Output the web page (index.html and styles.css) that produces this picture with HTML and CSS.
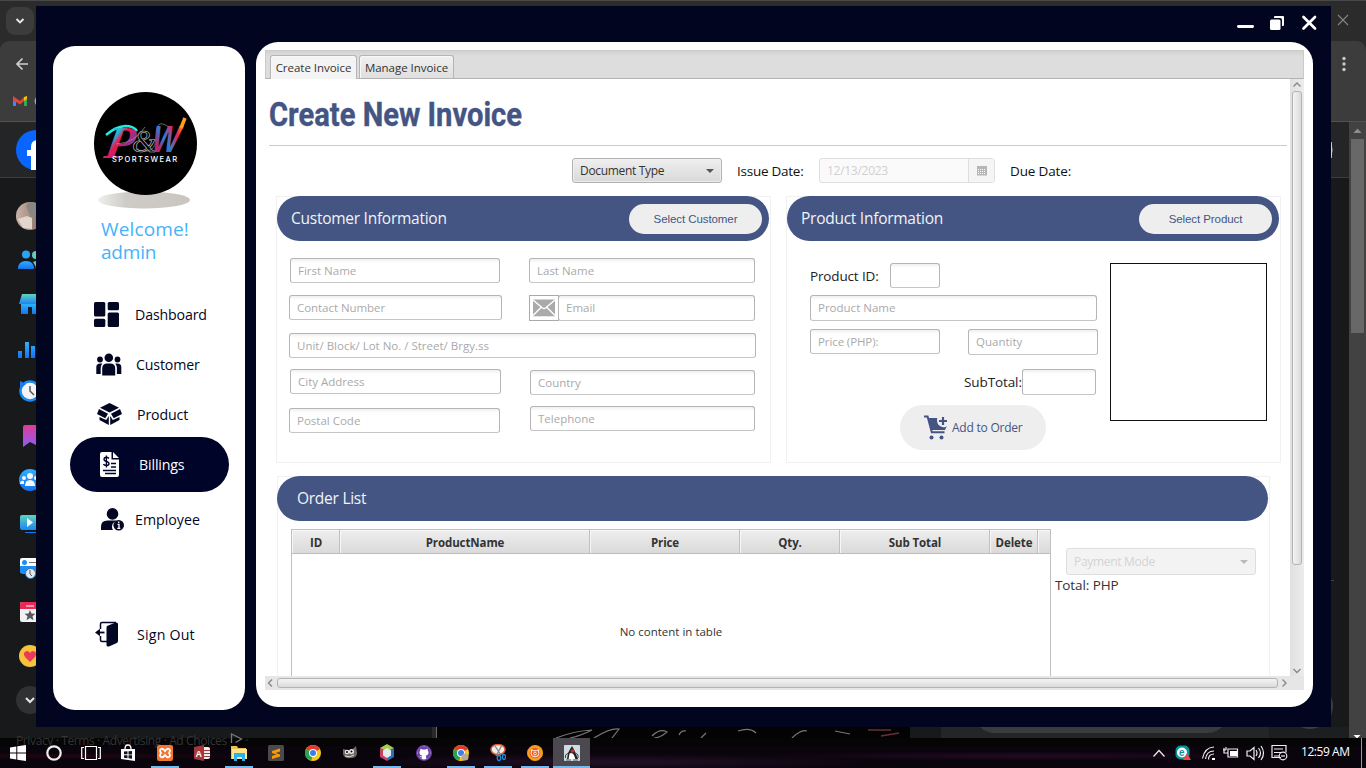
FILE: index.html
```html
<!DOCTYPE html>
<html lang="en">
<head>
<meta charset="utf-8">
<title>Create Invoice</title>
<link rel="stylesheet" href="styles.css">
</head>
<body>
<div class="desktop">
  <div class="browser">
    <div class="tabstrip"></div>
    <div class="toolbar"></div>
    <div class="site-head"></div>
    <div class="site-body"></div>
    <svg class="edge" width="1366" height="738" viewBox="0 0 1366 738">
      <defs>
        <linearGradient id="teal" x1="0" y1="0" x2="0" y2="1"><stop offset="0" stop-color="#5ed3c0"/><stop offset="1" stop-color="#1b84f5"/></linearGradient>
        <linearGradient id="blue" x1="0" y1="0" x2="0" y2="1"><stop offset="0" stop-color="#2fb0fb"/><stop offset="1" stop-color="#1772ee"/></linearGradient>
        <linearGradient id="mark" x1="0" y1="0" x2="0" y2="1"><stop offset="0" stop-color="#dd3c98"/><stop offset="1" stop-color="#8e5cf5"/></linearGradient>
        <linearGradient id="face" x1="0" y1="0" x2="1" y2="0"><stop offset="0" stop-color="#c9b4ab"/><stop offset=".55" stop-color="#a58b7e"/><stop offset="1" stop-color="#6e5a52"/></linearGradient>
      </defs>
      <rect x="6" y="7" width="28" height="28" rx="9" fill="#3c3c3c"/>
      <path d="M16.500 19l3.500 3.500 3.500-3.500" fill="none" stroke="#e8e8e8" stroke-width="1.900"/>
      <path d="M28 64H17M22.500 58.500L17 64l5.500 5.500" fill="none" stroke="#cfcfcf" stroke-width="1.700"/>
      <path d="M13 97v9h3v-6z" fill="#4285f4"/><path d="M27 97v9h-3v-6z" fill="#34a853"/><path d="M24 97l3-1v3l-3 2z" fill="#fbbc04"/><path d="M13 96l7 5 4-4v4l-4 3.500L13 100z" fill="#ea4335"/>
      <path d="M38 96.500q-5 4.500 0 9" fill="none" stroke="#8ab4d8" stroke-width="2"/>
      <circle cx="36" cy="150" r="20" fill="#0866ff"/>
      <path d="M31 170v-14h-4v-6h4v-3q0-7 7-7v30z" fill="#fff"/>
      <circle cx="30" cy="216" r="14" fill="url(#face)"/><path d="M18 219l9-3 5 2v11l-9-1z" fill="#e2d5cd"/><path d="M26 206q5-6 10-3v14h-5z" fill="#8a8683"/>
      <circle cx="26" cy="254.500" r="4" fill="#2aa5f6"/><path d="M18 269q0-8 8-8t8 8z" fill="url(#blue)"/><path d="M36 251q-4 0-4 4t4 4zM36 261l-3 1q3 4 3 7z" fill="#63cdbb"/>
      <path d="M22 294h14v10H19z" fill="url(#teal)"/><path d="M21 304h15v10h-4v-7h-4v7h-7z" fill="url(#blue)"/>
      <path d="M18 351h4v7h-4zM25 342h4v16h-4zM31 346h4v12h-4z" fill="url(#blue)"/>
      <circle cx="30" cy="391" r="9.500" fill="#f2f4f7" stroke="#168cf3" stroke-width="2.500"/><path d="M20 381l6 3-6 5z" fill="#1b7af0"/><path d="M30 386v5l4 4" fill="none" stroke="#555" stroke-width="1.500"/>
      <path d="M23 427q0-2 2-2h11v20l-6-3-7 5z" fill="url(#mark)"/>
      <circle cx="30" cy="480" r="11" fill="url(#blue)"/><g fill="#f3f6fa"><circle cx="30" cy="476" r="3"/><circle cx="24" cy="478" r="2"/><circle cx="36" cy="478" r="2"/><path d="M25 486q0-6 5-6t5 6zM20 484q0-4 4-3v3z"/></g>
      <path d="M20 517q0-2 2-2h14v15H22q-2 0-2-2z" fill="url(#teal)"/><path d="M27 518l6 4.500-6 4.500z" fill="#fff"/><path d="M25 532.500h11" stroke="#1877f2"/>
      <rect x="20" y="558" width="18" height="15" rx="2" fill="#fff"/><path d="M20 566h16v8H23q-3 0-3-3z" fill="#1b8df5"/><circle cx="24.500" cy="562.500" r="2.500" fill="#1b8df5"/><path d="M29 562.500h7" stroke="#66727c"/><circle cx="30.500" cy="573.500" r="5" fill="#e4e6e9" stroke="#2f74b8"/><path d="M30 570v4l2 2" fill="none" stroke="#555"/>
      <rect x="20" y="602" width="20" height="20" rx="2" fill="#f1f2f4"/><path d="M20 609v-5q0-2 2-2h14v7z" fill="#ea2a55"/><path d="M26 606h8" stroke="#fff"/><path d="M30 610l1.500 3.500 4 .3-3 2.500 1 4-3.500-2.300-3.500 2.300 1-4-3-2.500 4-.3z" fill="#55585d"/>
      <circle cx="30" cy="656" r="11" fill="#f8c33c"/><path d="M30 662l-5-5q-3-5 2-6 2 0 3 2 1-2 3-2 5 1 2 6z" fill="#ee3a58"/>
      <circle cx="30" cy="700" r="14" fill="#303132"/><path d="M26 698l4 4 4-4" fill="none" stroke="#e6e6e6" stroke-width="2"/>
      <path d="M1338 15l10 10M1348 15l-10 10" stroke="#858585" stroke-width="1.100"/>
      <g fill="#c9c9c9"><circle cx="1344" cy="58.500" r="1.700"/><circle cx="1344" cy="64" r="1.700"/><circle cx="1344" cy="69.500" r="1.700"/></g>
      <path d="M1331 142q2 8 0 16z" fill="#d8cfc9" stroke="#d8cfc9"/>
      <rect x="1349" y="122" width="17" height="616" fill="#424242"/><path d="M1353.500 133l4-4.500 4 4.500z" fill="#8d8d8d"/><rect x="1351" y="139" width="13" height="194" fill="#686868"/><path d="M1353.500 735h7l-3.500 3.500z" fill="#fff"/>
      <path d="M432 727h5v11h-5z" fill="#29292b"/><path d="M437 727h473v11H437z" fill="#030303"/><path d="M436.500 727v11" stroke="#6a6a6a"/>
      <path d="M941 727h328v11H941z" fill="#242526"/><path d="M1269 727h80v11h-80z" fill="#1d1e1f"/>
      <path d="M980 727h242q-6 6-16 6H996q-10 0-16-6z" fill="#3a3b3c"/><circle cx="1310" cy="706" r="23" fill="#3c3d3f"/>
      <path d="M1331 580.500h3" stroke="#3e4042"/>
      <g fill="none" stroke="#77777a" stroke-width="1.200"><path d="M556 738q18-7 36-8-12 6-22 8M594 738q16-10 25-9l-7 9M652 736q8-8 15-4-7 6-13 6M679 735q2-5 7-4M706 733l-5 5M738 731q12-4 18 2M792 738q9-9 15-7M835 731l15 3"/></g>
      <path d="M868 730h23M881 736l18-3" stroke="#643238" stroke-width="1.500"/>
    </svg>
  </div>

  <div class="app">
    <aside class="sidebar">
      <svg class="logo" width="110" height="120" viewBox="0 0 110 120">
        <defs>
          <linearGradient id="pg" x1="0" y1="0" x2="1" y2="1"><stop offset="0" stop-color="#18f0dc"/><stop offset=".33" stop-color="#24b9d2"/><stop offset=".45" stop-color="#ed174f"/><stop offset=".65" stop-color="#8f3193"/><stop offset="1" stop-color="#2cc8ee"/></linearGradient>
          <linearGradient id="wg" x1="0" y1="1" x2="1" y2="0"><stop offset="0" stop-color="#f01d55"/><stop offset=".25" stop-color="#b52474"/><stop offset=".45" stop-color="#287fd3"/><stop offset=".7" stop-color="#ed2250"/><stop offset=".9" stop-color="#ff9c19"/></linearGradient>
          <linearGradient id="sh"><stop offset="0" stop-color="#efefed"/><stop offset=".3" stop-color="#cfccc8"/><stop offset="1" stop-color="#c9c6c1"/></linearGradient>
        </defs>
        <ellipse cx="54" cy="110" rx="46" ry="8.500" fill="url(#sh)"/>
        <circle cx="55.500" cy="53.500" r="51.500" fill="#000"/>
        <path d="M16 45q9-8 19-9 9 0 12 5" fill="none" stroke="#1feddd" stroke-width="2.500"/>
        <text class="logo-p" fill="url(#pg)" transform="translate(13 68) skewX(-10) scale(1.050 1)">P</text>
        <text x="42" y="62" class="logo-amp">&amp;</text>
        <path d="M26 54q19-1 29-17M46 59q20 8 20-13t16-6" fill="none" stroke="#aaa" stroke-width=".6"/>
        <text class="logo-w" fill="url(#wg)" transform="translate(61 62) skewX(-8) scale(.75 1)">W</text>
        <path d="M91 38l4-10" stroke="#ff9e1a" stroke-width="3.500"/>
        <text x="22" y="71.500" class="logo-s" textLength="65" lengthAdjust="spacing">SPORTSWEAR</text>
      </svg>
      <div class="welcome"><div class="w1">Welcome!</div><div class="w2">admin</div></div>
      <nav class="menu">
        <a class="item dash"><svg width="25" height="25" viewBox="0 0 25 25" fill="#040724"><rect width="11.300" height="14.500" rx="1.500"/><rect y="16.800" width="11.300" height="8.200" rx="1.500"/><rect x="13.700" width="11.300" height="8.200" rx="1.500"/><rect x="13.700" y="10.400" width="11.300" height="14.600" rx="1.500"/></svg><span>Dashboard</span></a>
        <a class="item cust"><svg width="26" height="23" viewBox="0 0 26 23" fill="#040724"><circle cx="12.800" cy="4.700" r="4.300"/><circle cx="4" cy="6.500" r="2.900"/><circle cx="21.500" cy="6.500" r="2.900"/><path d="M6.200 22.500v-7q0-5 5-5h3q5 0 5 5v7zM.3 21v-7q0-3.600 4-3.600h2q-1.600 2-1.600 5V21zM25.300 21v-7q0-3.600-4-3.600h-2q1.600 2 1.600 5V21z"/></svg><span>Customer</span></a>
        <a class="item prod"><svg width="25" height="22" viewBox="0 0 25 22" fill="#040724"><path d="M12.500 0L22 4.700l-9.500 4.800L3 4.700z"/><path d="M2 6l9 4.700-2.700 4.600L0 11zM23 6l-9 4.700 2.700 4.600L25 11zM2.500 14l6.700 3 2.600-4V22l-9.300-5zM22.500 14l-6.700 3-2.600-4V22l9.300-5z"/></svg><span>Product</span></a>
        <a class="item bill active"><svg width="19" height="25" viewBox="0 0 19 25"><path d="M2 0h9.500v7.500H19V23q0 2-2 2H2q-2 0-2-2V2q0-2 2-2zM13 0l6 6h-6z" fill="#fff"/><path d="M9 6.500Q8 5 6 5.200T4 7.200q0 1.600 2.500 2.200T9 11.800Q9 13.500 6.500 13.500T3.500 12M6.400 3.500v12" fill="none" stroke="#000428" stroke-width="1.400"/><path d="M11 11.500h5M11 15h5M3 18.500h13M5 21.500h11" stroke="#000428" stroke-width="1.300"/></svg><span>Billings</span></a>
        <a class="item emp"><svg width="24" height="23" viewBox="0 0 24 23" fill="#040724"><circle cx="11.500" cy="5.900" r="5.800"/><path d="M0 22v-3.500q0-6 6.500-6h9.500q-5 2-5 6 0 2 1 3.500z"/><circle cx="17.700" cy="17.200" r="5.300"/><path d="M17.700 13.500v1.500M16.500 16.300h1.500v4M16.300 20.300h3" stroke="#fff" stroke-width="1.300" fill="none"/></svg><span>Employee</span></a>
        <a class="item out"><svg width="24" height="26" viewBox="0 0 24 26"><path d="M5.500 8V3q0-1.500 1.500-1.500h14M5.500 15v4q0 1.500 1.500 1.500h5" fill="none" stroke="#040724" stroke-width="1.500"/><path d="M12 5l8.500-3.500Q23 1 23 3v17q0 1.500-1.200 2L14 25.500q-2.500.5-2.500-1.500V7q0-1.500.5-2z" fill="#040724"/><path d="M9.500 11.500H3" stroke="#040724" stroke-width="1.800"/><path d="M0 11.500L5 7.800v7.400z" fill="#040724"/></svg><span>Sign Out</span></a>
      </nav>
    </aside>

    <section class="main">
      <div class="tabs"><div class="tab on"><span>Create Invoice</span></div><div class="tab"><span>Manage Invoice</span></div></div>
      <div class="viewport">
        <div class="content">
          <h1><span>Create New Invoice</span></h1>
          <div class="filters">
            <div class="combo doc"><span>Document Type</span><i class="caret"></i></div>
            <label class="issue">Issue Date:</label>
            <div class="date"><span>12/13/2023</span><b><svg width="10" height="10" viewBox="0 0 10 10"><path d="M0 0h10v9.500H0z" fill="#b5b5b5"/><path d="M1 3.500h8M1 5.500h8M1 7.500h8" stroke="#fff" stroke-dasharray="1 1"/></svg></b></div>
            <label class="due">Due Date:</label>
          </div>
          <div class="cards">
            <div class="card">
              <div class="bar"><span class="ci">Customer Information</span><button class="sc">Select Customer</button></div>
              <div class="row r1"><div class="field f1">First Name</div><div class="field f2">Last Name</div></div>
              <div class="row r2"><div class="field f3">Contact Number</div><div class="mail"><svg width="24" height="18" viewBox="0 0 24 18"><path d="M1 .5h22v16.800H1z" fill="#aaa"/><path d="M1 1l9.500 8q1.500 1.200 3 0L23 1M1 16.500l8-8M23 16.500l-8-8" fill="none" stroke="#fff" stroke-width="1.400"/></svg></div><div class="field f4">Email</div></div>
              <div class="row r3"><div class="field f5">Unit/ Block/ Lot No. / Street/ Brgy.ss</div></div>
              <div class="row r4"><div class="field f6">City Address</div><div class="field f7">Country</div></div>
              <div class="row r5"><div class="field f8">Postal Code</div><div class="field f9">Telephone</div></div>
            </div>
            <div class="card">
              <div class="bar"><span class="pi">Product Information</span><button class="sp">Select Product</button></div>
              <div class="product">
                <div class="pform">
                  <div class="row"><label class="pid">Product ID:</label><div class="field p1"></div></div>
                  <div class="row q2"><div class="field p2">Product Name</div></div>
                  <div class="row q3"><div class="field p3">Price (PHP):</div><div class="field p4">Quantity</div></div>
                  <div class="row q4"><label class="sub">SubTotal:</label><div class="field p5"></div></div>
                  <button class="add"><svg width="24" height="25" viewBox="0 0 24 25"><path d="M0 1.500h3.600l4.200 15.800h12.700" fill="none" stroke="#445584" stroke-width="2"/><path d="M4.500 3h8.700q-1.300 7 5 9 3 .8 4.600-.7L21 15H7.500z" fill="#445584"/><path d="M19 2v8M15 6h8" stroke="#445584" stroke-width="2.200"/><circle cx="7.500" cy="22.500" r="2" fill="#445584"/><circle cx="17.500" cy="22.500" r="2" fill="#445584"/></svg><span>Add to Order</span></button>
                </div>
                <div class="photo"></div>
              </div>
            </div>
          </div>
          <div class="orders">
            <div class="bar wide"><span class="ol">Order List</span></div>
            <div class="order-body">
              <div class="table">
                <div class="thead"><div>ID</div><div>ProductName</div><div>Price</div><div>Qty.</div><div>Sub Total</div><div>Delete</div><div></div></div>
                <div class="empty">No content in table</div>
              </div>
              <div class="pay"><div class="combo off"><span>Payment Mode</span><i class="caret"></i></div><div class="total">Total: PHP</div></div>
            </div>
          </div>
        </div>
        <div class="vscroll"><svg width="14" height="12" viewBox="0 0 14 12"><path d="M3.500 7.500L7 4l3.500 3.500" fill="none" stroke="#888" stroke-width="1.400"/></svg><div class="vthumb"></div><svg class="end" width="14" height="12" viewBox="0 0 14 12"><path d="M3.500 5L7 8.500 10.500 5" fill="none" stroke="#888" stroke-width="1.400"/></svg></div>
      </div>
      <div class="hscroll"><svg width="12" height="14" viewBox="0 0 12 14"><path d="M7 3.500L3.500 7 7 10.500" fill="none" stroke="#888" stroke-width="1.400"/></svg><div class="hthumb"></div><svg width="12" height="14" viewBox="0 0 12 14"><path d="M4.500 3.500L8 7l-3.500 3.500" fill="none" stroke="#888" stroke-width="1.400"/></svg></div>
    </section>
    <svg class="winbtns" width="80" height="18" viewBox="0 0 80 18"><rect y="11" width="17" height="3" rx="1.400" fill="#fff"/><path d="M37 3q0-1 1-1h8q1 0 1 1v8q0 1-1 1h-1V6q0-2-2-2h-6z" fill="#fff"/><rect x="33" y="5.500" width="10.500" height="10.500" rx="1.500" fill="#fff"/><path d="M66.500 3l11.500 11.500M78 3L66.500 14.500" stroke="#fff" stroke-width="2.700" stroke-linecap="round"/></svg>
  </div>

  <footer class="taskbar">
    <div class="ghost">Privacy · Terms · Advertising · Ad Choices <svg width="13" height="12" viewBox="0 0 13 12"><path d="M1.500 10V1l10 5-6 3.500" fill="none" stroke="#77787a" stroke-width="1.300"/></svg> ·</div>
    <div class="t wide1"><svg width="16" height="16" viewBox="0 0 16 16" fill="#fff"><path d="M0 2.500L6.300 1.500v6H0zM7.300 1.300L16 0v7.500H7.300zM0 8.500h6.300v6L0 13.600zM7.300 8.500H16V16l-8.700-1.300z"/></svg></div>
    <div class="t"><svg width="16" height="16" viewBox="0 0 16 16"><circle cx="8" cy="8" r="6.700" fill="none" stroke="#eee" stroke-width="2.200"/></svg></div>
    <div class="t"><svg width="20" height="16" viewBox="0 0 20 16"><path d="M4.500 1.500h11v13h-11zM3 2.500H.7v11H3M17 2.500h2.300v11H17" fill="none" stroke="#fff" stroke-width="1.200"/></svg></div>
    <div class="t"><svg width="16" height="18" viewBox="0 0 16 18"><path d="M1 5h14v12L1 15z" fill="#fff"/><path d="M5 5q0-4 3-4t3 4" fill="none" stroke="#fff" stroke-width="1.300"/><path d="M4 7.500l3.500-.2v3H4zM8.500 7.200l3.500-.3v3.500H8.500zM4 11.200h3.500v3L4 13.800zM8.500 11.200H12v3.500l-3.500-.4z" fill="#15111a"/></svg></div>
    <div class="t run"><svg width="16" height="16" viewBox="0 0 16 16"><rect width="16" height="16" rx="2" fill="#f4762c"/><path d="M4 4q2-1 4 2 2-3 4-2t0 4q2 3 0 4t-4-2q-2 3-4 2t0-4q-2-3 0-4z" fill="none" stroke="#fff" stroke-width="1.800"/></svg></div>
    <div class="t"><svg width="16" height="16" viewBox="0 0 16 16"><path d="M0 2l10-2v16L0 14z" fill="#a4373a"/><text x="1.500" y="12" class="ac">A</text><path d="M10 2h4q2 0 2 2v8q0 2-2 2h-4z" fill="#eee"/><path d="M10 5.500h6M10 8.500h6M10 11.500h6" stroke="#a4373a"/></svg></div>
    <div class="t run"><svg width="16" height="16" viewBox="0 0 16 16"><path d="M0 1h6l1 2h8v11H0z" fill="#f0c050"/><path d="M1 4h15v10H1z" fill="#ffe48c"/><path d="M3 8h11v8h-3v-4H6v4H3z" fill="#29b3ee"/></svg></div>
    <div class="t"><svg width="16" height="16" viewBox="0 0 16 16"><rect width="16" height="16" rx="1.500" fill="#4a4a4a"/><path d="M4 6l8-2.500v3L7.500 8 12 9.500v2L4 14v-3l4.500-1.500L4 8z" fill="#ff9800"/></svg></div>
    <div class="t"><svg width="16" height="16" viewBox="0 0 16 16"><circle cx="8" cy="8" r="8" fill="#f9c916"/><path d="M8 8L1 4q2.500-4 7-4t7 4z" fill="#e33b2e"/><path d="M8 8L1 4q-3 6 2 10.500l3.500.5z" fill="#2ba24c"/><circle cx="8" cy="8" r="4" fill="#fff"/><circle cx="8" cy="8" r="3" fill="#3c7de8"/></svg></div>
    <div class="t"><svg width="16" height="16" viewBox="0 0 16 16"><path d="M1 4l4 1 4 .5L14 1l1 7q0 5-6 5-7 1-8-4z" fill="#6e6a62"/><circle cx="5" cy="7" r="2.200" fill="#eee"/><circle cx="9.500" cy="6.500" r="2.500" fill="#eee"/><circle cx="5" cy="7" r="1"/><circle cx="9.500" cy="6.500" r="1"/><path d="M3 11q5 2 9-1" stroke="#ddd" fill="none"/></svg></div>
    <div class="t run"><svg width="16" height="18" viewBox="0 0 16 18"><path d="M8 0l7 4-7 4-7-4z" fill="#a4cf4a"/><path d="M1 4l7 4v9l-7-4z" fill="#c34263"/><path d="M15 4L8 8v9l7-4z" fill="#2c6fb3"/><path d="M8 4l4 2.500v5L8 14l-4-2.500v-5z" fill="#e4eaec"/></svg></div>
    <div class="t"><svg width="16" height="16" viewBox="0 0 16 16"><circle cx="8" cy="8" r="7.200" fill="#fff" stroke="#6e40a8" stroke-width="1.500"/><path d="M8 1.500a6.500 6.500 0 0 0-2.200 12.600v-1.800q-1.600.3-2.300-1.200 1.200 0 2.400.4l.5-.8Q3.500 10.200 3.500 7.500q0-1.200.8-1.900-.2-1 .1-1.900 1 0 2 .9 1.600-.4 3.200 0 1-.9 2-.9.3 1 .1 1.900.8.800.8 1.900 0 2.700-2.900 3.200.5.500.5 1.300v2.100A6.500 6.500 0 0 0 8 1.500z" fill="#6e40a8"/></svg></div>
    <div class="t run"><svg width="16" height="16" viewBox="0 0 16 16"><circle cx="8" cy="8" r="8" fill="#f9c916"/><path d="M8 8L1 4q2.500-4 7-4t7 4z" fill="#e33b2e"/><path d="M8 8L1 4q-3 6 2 10.500l3.500.5z" fill="#2ba24c"/><circle cx="8" cy="8" r="4" fill="#fff"/><circle cx="8" cy="8" r="3" fill="#3c7de8"/><circle cx="12" cy="12" r="3.600" fill="#b9a69b"/></svg></div>
    <div class="t run"><svg width="16" height="18" viewBox="0 0 16 18"><ellipse cx="8" cy="5.500" rx="7" ry="5" fill="#eee" stroke="#e2562c" stroke-width="1.500"/><path d="M5 2l6 9M12 1L6 12" stroke="#888" stroke-width="1.300"/><ellipse cx="9" cy="14" rx="1.700" ry="2.500" fill="none" stroke="#1b90dc" stroke-width="1.300"/><ellipse cx="14" cy="13" rx="1.500" ry="2.500" fill="none" stroke="#1b90dc" stroke-width="1.300"/></svg></div>
    <div class="t run"><svg width="16" height="16" viewBox="0 0 16 16"><path d="M8 0l3 .5L14 2.500l1.500 2.500.5 3-.5 3-2.500 3-2 1.500L8 16l-3-.5L2.500 13.500.5 11 0 8l.5-3L2.500 2.500 5 .5z" fill="#f9a01b"/><circle cx="8" cy="8" r="5.300" fill="#f15c22"/><path d="M4.500 4.800l2 .9h3l2-.9.3 3.700q0 3.300-3.800 3.300T4.200 8.500z" fill="none" stroke="#fff" stroke-width=".9"/><circle cx="8" cy="8.500" r="1.400" fill="none" stroke="#fff" stroke-width=".8"/></svg></div>
    <div class="t cur"><svg width="16" height="16" viewBox="0 0 16 16"><rect width="16" height="16" rx="1" fill="#cfdce4"/><path d="M8 1q2 3 3.500 7l2.500 6H3l1-6q2-4 4-7z" fill="#222"/><path d="M5.500 8.500q2.500-1.500 4.500 1.500l1.500 4.500H4.500z" fill="#fff"/><circle cx="8.500" cy="6" r="1.800" fill="#e8231c"/><path d="M4.500 8L1.500 10v3M11.500 8l2.500 2v3" fill="none" stroke="#444"/><path d="M2 15h5M9 15h5" stroke="#555"/></svg></div>
    <svg class="tray" width="220" height="30" viewBox="1146 738 220 30"><g fill="none" stroke="#eee" stroke-width="1.200"><path d="M1153.500 756.500l5.500-6 5.500 6M1205.500 759q1-8 8.500-8M1208.500 759.500q0-5.500 5.500-5.500M1202.500 758.500q2-11 11.500-11.500M1228 749h9.500v8H1228zM1224 748v5h4M1223 750h3M1226 747v3M1247 751h3l4-3.500v12l-4-3.500h-3zM1256 750q2 3 0 6M1258.500 748q4 5 0 10M1261 746q5 7 0 14M1281 757.500h-9v-12h14v7M1274 749h9M1274 752.500h7M1274 756h5"/><circle cx="1283" cy="756" r="3.800"/><path d="M1281 756h4"/></g><path d="M1230 751h7v5h-7z" fill="#fff"/><path d="M1212 758h3v2h-3z" fill="#fff"/><rect x="1175.500" y="745.500" width="14" height="14" rx="5" fill="#0b909c"/><circle cx="1182" cy="752.500" r="5" fill="#fff"/><text x="1179" y="756" class="eset">e</text><path d="M1187 753l4 7h-8z" fill="#e74b3c"/><path d="M1361.500 738v30" stroke="#999"/></svg>
    <span class="clock">12:59 AM</span>
  </footer>
</div>
</body>
</html>
```
FILE: styles.css
```css
* { box-sizing: border-box; }
body { margin: 0; overflow: hidden; font-family: "Open Sans", "Noto Sans", sans-serif; font-size: 11.5px; color: #333; }
h1 { margin: 0; }
button { border: 0; font: inherit; padding: 0; }
.desktop { position: relative; width: 1366px; height: 768px; overflow: hidden; background: #18191a; }

/* browser behind the application */
.browser { height: 738px; display: flex; flex-direction: column; background: #2b2b2b; }
.tabstrip { height: 41px; border-top: 1px solid #484848; }
.toolbar { height: 81px; background: #3c3c3c; border-radius: 9px 9px 0 0; border-bottom: 1px solid #505152; }
.site-head { height: 56px; background: #242527; border-bottom: 1px solid #3b3c3d; }
.site-body { flex: 1; background: #18191a; }
.edge { position: absolute; left: 0; top: 0; }

/* application window */
.app { position: absolute; left: 36px; top: 6px; width: 1295px; height: 721px; background: #020520; display: flex; align-items: flex-start; padding: 36px 18px 0 17px; gap: 11px; }
.winbtns { position: absolute; left: 1201px; top: 8px; }
.sidebar { width: 192px; height: 664px; margin-top: 4px; background: #fff; border-radius: 22px; padding-top: 44px; }
.logo { display: block; margin-left: 37px; }
.logo-p { font: italic 700 46px "Liberation Serif", serif; }
.logo-w { font: italic 700 38px "Liberation Sans", sans-serif; }
.logo-amp { font: italic 400 32px "Liberation Serif", serif; fill: none; stroke: #ccc; stroke-width: .6; }
.logo-s { font: 500 7.500px Inter, sans-serif; fill: #fff; }
.welcome { margin: 8px 0 0 48px; font-size: 19px; line-height: 23px; color: #45b2fb; white-space: nowrap; }
.w1 { letter-spacing: .15px; }
.w2 { letter-spacing: -.2px; }
.menu { margin-top: 25px; }
.item { display: flex; align-items: center; height: 50px; font-size: 14.2px; color: #040724; white-space: nowrap; letter-spacing: -.15px; }
.dash { padding-left: 41px; } .dash span { margin-left: 16px; }
.cust { padding-left: 43px; } .cust span { margin-left: 14px; }
.prod { padding-left: 44px; height: 48px; } .prod span { margin-left: 15px; }
.prod svg, .prod span { margin-top: 2px; }
.bill { height: 55px; width: 159px; margin-left: 17px; padding-left: 30px; border-radius: 28px; } .bill span { margin-left: 20px; }
.active { background: #000428; color: #fff; }
.emp { padding-left: 48px; height: 55px; } .emp span { margin-left: 10px; letter-spacing: 0; }
.out { padding-left: 42px; margin-top: 62px; } .out span { margin-left: 18px; letter-spacing: .2px; }

.main { width: 1057px; height: 665px; background: #fff; border-radius: 22px; padding: 8px 9px 0; }
.tabs { height: 29px; background: linear-gradient(#d2d2d2, #ddd 5px); border: 1px solid #cbcbcb; border-bottom: 1px solid #b3b3b3; display: flex; padding: 4px 0 0 4px; gap: 2px; }
.tab { height: 23px; border: 1px solid #b5b5b5; border-bottom: 0; border-radius: 3px 3px 0 0; background: linear-gradient(#f0f0f0, #dfdfdf); width: 95px; display: flex; align-items: center; justify-content: center; white-space: nowrap; font-size: 11.500px; box-shadow: inset 1px 1px #f8f8f8; }
.tab.on { width: 87px; height: 24px; background: #f4f4f4; }
.tab span { letter-spacing: -.03px; }
.tab.on span { padding-bottom: 1px; }
.viewport { display: flex; height: 597px; }
.content { width: 1025px; height: 597px; overflow: hidden; padding-left: 4px; }
h1 { width: 1018px; height: 67px; border-bottom: 1px solid #cbcbcb; color: #445584; font: 700 34px/70px Roboto, sans-serif; white-space: nowrap; }
h1 span { display: inline-block; transform: scaleX(.857); transform-origin: 0 0; -webkit-text-stroke: .4px #445584; }
.filters { display: flex; align-items: center; height: 25px; margin: 12px 0 13px 303px; font-size: 13.500px; color: #111; white-space: nowrap; }
.combo { display: flex; justify-content: space-between; align-items: center; border: 1px solid #b2b2b2; border-radius: 3px; background: linear-gradient(#efefef, #d9d9d9); box-shadow: inset 0 0 0 1px #f3f3f3aa; padding: 0 7px; color: #333; }
.doc { width: 150px; height: 25px; font-size: 12px; letter-spacing: -.32px; }
.caret { border: 4.500px solid transparent; border-top-color: #555; border-bottom: 0; }
.issue { width: 82px; margin-left: 15px; letter-spacing: -.25px; }
.date { display: flex; width: 176px; height: 25px; border: 1px solid #dedede; border-radius: 3px; color: #d0d0d0; font-size: 12px; letter-spacing: -.28px; background: #fafafa; }
.date span { flex: 1; padding-left: 7px; line-height: 23px; }
.date b { width: 26px; border-left: 1px solid #dedede; display: flex; align-items: center; justify-content: center; background: #f5f5f5; }
.due { margin-left: 15px; letter-spacing: -.15px; }
.cards { display: flex; gap: 15px; margin-left: 7px; height: 267px; }
.card { width: 495px; height: 267px; border: 1px solid #f1f1f1; }
.bar { width: 492px; height: 45px; margin-top: -1px; border-radius: 23px; background: #445584; display: flex; justify-content: space-between; align-items: center; padding: 0 7px 0 14px; color: #f1f3f7; font-size: 15.500px; letter-spacing: -.26px; white-space: nowrap; }
.bar span { padding-bottom: 1px; }
.bar button { width: 133px; height: 30px; border-radius: 15px; background: #eee; color: #445584; font: 11.500px "Liberation Sans", sans-serif; letter-spacing: -.08px; }
.row { display: flex; align-items: flex-start; }
.field { height: 25px; border: 1px solid #b5b5b5; border-bottom-color: #c5c5c5; border-radius: 3px; background: linear-gradient(#f0f0f0, #fff 4px); color: #aaa; font-size: 11.500px; line-height: 24px; padding-left: 7px; white-space: nowrap; flex: none; }
.r1 { margin: 17px 0 0 13px; } .r2 { margin: 12px 0 0 12px; } .r3 { margin: 12px 0 0 12px; } .r4 { margin: 11px 0 0 13px; } .r5 { margin: 11px 0 0 12px; }
.f1 { width: 210px; } .f2 { width: 226px; margin-left: 29px; }
.f3 { width: 213px; letter-spacing: -.05px; } .f4 { width: 197px; height: 26px; margin-left: -1px; } .f5 { width: 467px; }
.mail { width: 30px; height: 26px; margin-left: 27px; border: 1px solid #aaa; display: flex; align-items: center; justify-content: center; }
.f6 { width: 211px; } .f7 { width: 225px; margin: 1px 0 0 29px; }
.f8 { width: 211px; margin-top: 2px; } .f9 { width: 225px; margin-left: 30px; }
.product { display: flex; padding: 22px 0 0 23px; }
.pform { width: 300px; color: #222; font-size: 13.500px; white-space: nowrap; }
.pid { width: 80px; line-height: 26px; letter-spacing: -.15px; }
.p1 { width: 50px; } .q2 { margin-top: 6px; } .p2 { width: 287px; height: 26px; }
.q3 { margin-top: 8px; } .p3 { width: 130px; letter-spacing: -.1px; } .p4 { width: 130px; height: 26px; margin-left: 28px; }
.q4 { margin: 14px 0 0 154px; } .sub { width: 58px; line-height: 26px; letter-spacing: -.1px; } .p5 { width: 74px; height: 26px; }
.add { display: flex; align-items: center; gap: 4px; width: 146px; height: 45px; margin: 10px 0 0 90px; padding-left: 24px; border-radius: 23px; background: #eee; color: #445584; font-size: 12px; letter-spacing: -.23px; white-space: nowrap; }
.photo { width: 157px; height: 158px; border: 1px solid #111; }
.orders { width: 993px; height: 300px; margin: 13px 0 0 8px; border: 1px solid #f1f1f1; }
.wide { width: 991px; margin-left: -1px; padding-left: 20px; }
.order-body { display: flex; margin: 8px 0 0 13px; }
.table { width: 760px; height: 250px; border: 1px solid #c0c0c0; }
.thead { display: grid; grid-template-columns: 48px 250px 150px 100px 150px 48px 12px; height: 24px; border-bottom: 1px solid #bdbdbd; font-weight: 700; color: #333; white-space: nowrap; font-size: 11.500px; }
.thead div { display: flex; align-items: center; justify-content: center; padding: 2px 0 0 1px; background: linear-gradient(#eee, #dadada); border-right: 1px solid #c0c0c0; box-shadow: inset 1px 1px #f7f7f7; letter-spacing: -.1px; }
.thead div:last-child { border-right: 0; }
.empty { height: 155px; display: flex; align-items: center; justify-content: center; }
.pay { padding: 19px 0 0 4px; }
.off { width: 190px; height: 27px; margin-left: 11px; border-color: #dedede; background: #f3f3f3; color: #d3d3d3; font-size: 12px; letter-spacing: -.3px; }
.off .caret { border-top-color: #b9b9b9; }
.total { font-size: 13.500px; line-height: 20px; color: #333; letter-spacing: -.1px; }
.vscroll { width: 14px; background: linear-gradient(90deg, #e0e0e0, #ececec); display: flex; flex-direction: column; }
.vthumb { width: 10px; height: 474px; margin-left: 2px; border: 1px solid #b3b3b3; border-radius: 3px; background: linear-gradient(90deg, #f4f4f4, #dadada); }
.end { margin-top: auto; }
.hscroll { height: 14px; background: #e6e6e6; display: flex; align-items: center; }
.hthumb { width: 1001px; height: 10px; border: 1px solid #b3b3b3; border-radius: 3px; background: linear-gradient(#f4f4f4, #dadada); }

/* desktop taskbar */
.taskbar { position: relative; height: 30px; display: flex; align-items: flex-start; background: linear-gradient(#050505 0 8px, transparent 8px), radial-gradient(ellipse at 5% 60%, #24050f, transparent 12%), radial-gradient(ellipse at 45% 80%, #231126, transparent 25%), radial-gradient(ellipse at 75% 60%, #250a24, transparent 18%), #0a040d; }
.ghost { position: absolute; left: 16px; top: -5px; font-size: 12px; line-height: 16px; letter-spacing: -.38px; white-space: nowrap; color: #343435; }
.t { width: 37px; height: 30px; display: flex; align-items: center; justify-content: center; position: relative; flex: none; }
.wide1 { width: 35px; }
.run { background: linear-gradient(#76b9ed, #76b9ed) center bottom / 28px 2px no-repeat; }
.cur { background: linear-gradient(transparent 28px, #76b9ed 28px), #4b4850; }
.ac { font: 700 9px "Liberation Sans", sans-serif; fill: #fff; }
.eset { font: 700 10px "Liberation Sans", sans-serif; fill: #0b909c; }
.tray { position: absolute; left: 1146px; top: 0; }
.clock { position: absolute; left: 1301px; top: 5px; font-size: 12px; line-height: 17px; color: #fff; white-space: nowrap; letter-spacing: -.45px; }
```
